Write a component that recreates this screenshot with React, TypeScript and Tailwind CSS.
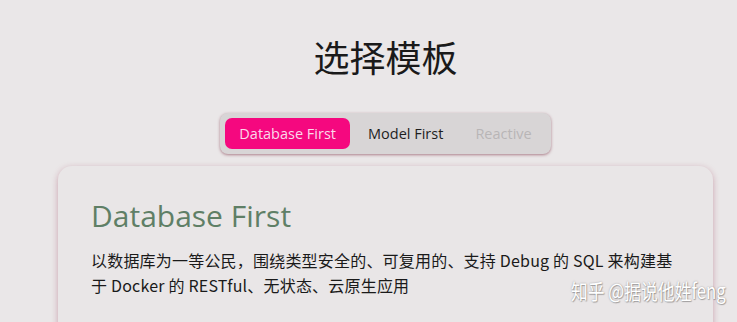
import React from "react";

export default function App() {
  const font = { fontFamily: '"Segoe UI", "Open Sans", "Noto Sans CJK SC", sans-serif' };
  return (
    <div className="relative w-[737px] h-[322px] overflow-hidden bg-[#eae7e8]" style={font}>
      <div className="ml-[58px] w-[655px]">
        <div className="flex flex-col items-center pt-[30px]">
          <h1 className="text-[36px] leading-[52px] text-[#1a1a1a] font-normal" style={{ fontFamily: '"Noto Sans CJK SC", sans-serif' }}>
            选择模板
          </h1>
          <div className="mt-[31px] flex items-center gap-[4px] rounded-[8px] bg-[#d8d5d6] p-[5px] shadow-[0_1px_3px_rgba(120,40,60,0.55)]">
            <button className="h-[31px] rounded-[7px] bg-[#f5087f] px-[14px] text-[14.5px] text-[#fbd9ea]">Database First</button>
            <button className="h-[31px] rounded-[7px] px-[14px] text-[14.5px] text-[#1e1e1e]">Model First</button>
            <button className="h-[31px] rounded-[7px] px-[14px] text-[14.5px] text-[#b8b5b6]">Reactive</button>
          </div>
        </div>
        <div className="mt-[12px] h-[200px] rounded-[14px] bg-[#e9e6e7] px-[33px] pt-[30px] shadow-[0_2px_6px_rgba(160,60,90,0.4)]">
          <h2 className="text-[30px] leading-[40px] text-[#5f7f66]">Database First</h2>
          <p className="mt-[12px] max-w-[586px] text-[16px] leading-[25px] tracking-[0.2px] text-[#1a1a1a]" style={{ fontFamily: '"Noto Sans CJK SC", sans-serif' }}>
            以数据库为一等公民，围绕类型安全的、可复用的、支持 Debug 的 SQL 来构建基于 Docker 的 RESTful、无状态、云原生应用
          </p>
        </div>
      </div>
      <div
        className="absolute left-[571px] top-[275px] origin-left scale-x-[0.8] whitespace-nowrap text-[21px] leading-[30px] text-white"
        style={{ fontFamily: '"Noto Sans CJK SC", sans-serif', textShadow: '0 0 2px rgba(0,0,0,0.35), 1px 1px 1px rgba(0,0,0,0.25)' }}
      >
        知乎 @据说他姓feng
      </div>
    </div>
  );
}
